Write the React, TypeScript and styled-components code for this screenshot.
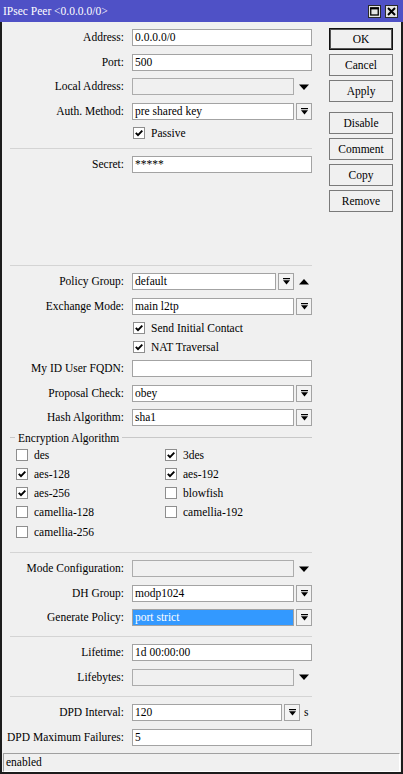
import React from 'react';
import styled, { createGlobalStyle, css } from 'styled-components';

/* ------------------------------- Global ------------------------------- */
const GlobalStyle = createGlobalStyle`
  html, body {
    margin: 0;
    padding: 0;
    background: #f0f0f0;
  }
  #root {
    width: 403px;
    height: 774px;
  }
  * {
    box-sizing: border-box;
  }
`;

const FONT = `'Liberation Serif', 'DejaVu Serif', serif`;

/* ------------------------------- Window ------------------------------- */
const Window = styled.div`
  width: 403px;
  height: 774px;
  display: flex;
  flex-direction: column;
  background: #f0f0f0;
  font-family: ${FONT};
  font-size: 11.5px;
  color: #000;
`;

const TitleBar = styled.div`
  height: 22px;
  flex: none;
  display: flex;
  align-items: center;
  justify-content: space-between;
  padding: 0 5px 0 3px;
  background: #4f51c6;
  color: #fff;
  font-size: 11.5px;
`;

const TitleButtons = styled.div`
  display: flex;
  gap: 4px;
`;

const TitleButton = styled.div`
  width: 13px;
  height: 13px;
  display: flex;
  align-items: center;
  justify-content: center;
  background: #e4e4e4;
  border: 1px solid #2a2a2a;
`;

const Frame = styled.div`
  flex: 1;
  display: flex;
  flex-direction: column;
  border-left: 2px solid #1c1c1c;
  border-right: 2px solid #1c1c1c;
  border-bottom: 2px solid #1c1c1c;
`;

const Body = styled.div`
  flex: 1;
  display: flex;
  padding-top: 7px;
`;

/* -------------------------------- Form -------------------------------- */
const Form = styled.div`
  width: 310px;
  display: flex;
  flex-direction: column;
`;

const Row = styled.div`
  display: grid;
  grid-template-columns: 122px 180px;
  column-gap: 8px;
  height: 17px;
  margin-bottom: 7.5px;
`;

const Label = styled.div`
  text-align: right;
  line-height: 17px;
  white-space: nowrap;
`;

const Field = styled.div`
  display: flex;
  align-items: stretch;
  gap: 2px;
`;

const TextBox = styled.div<{ $disabled?: boolean; $selected?: boolean }>`
  flex: 1;
  min-width: 0;
  height: 17px;
  line-height: 15px;
  padding-left: 2px;
  border: 1px solid #a3a3a3;
  background: #fff;
  white-space: nowrap;
  overflow: hidden;
  ${(p) =>
    p.$disabled &&
    css`
      background: #f0f0f0;
      border-color: #acacac;
    `}
  ${(p) =>
    p.$selected &&
    css`
      background: #3399ff;
      color: #fff;
    `}
`;

const DropButton = styled.div`
  width: 16px;
  flex: none;
  display: flex;
  align-items: center;
  justify-content: center;
  border: 1px solid #a3a3a3;
  background: #f3f3f3;
`;

const BareArrow = styled.div`
  width: 16px;
  flex: none;
  display: flex;
  align-items: center;
  justify-content: center;
`;

const Suffix = styled.div`
  width: 10px;
  flex: none;
  line-height: 17px;
  padding-left: 2px;
`;

const CheckRow = styled.div<{ $indent?: number }>`
  display: flex;
  align-items: center;
  gap: 6px;
  height: 12px;
  margin-bottom: 7px;
  padding-left: ${(p) => p.$indent ?? 131}px;
  white-space: nowrap;
`;

const Box = styled.div`
  width: 12px;
  height: 12px;
  flex: none;
  display: flex;
  align-items: center;
  justify-content: center;
  border: 1px solid #8e8e8e;
  background: #fff;
`;

const Separator = styled.div<{ $above?: number }>`
  height: 1px;
  margin: ${(p) => p.$above ?? 2}px 0 7px 8px;
  background: #d4d4d4;
`;

const Spacer = styled.div<{ $h: number }>`
  height: ${(p) => p.$h}px;
  flex: none;
`;

const GroupHeader = styled.div`
  display: flex;
  align-items: center;
  height: 10px;
  margin: -1px 0 6px 8px;
  white-space: nowrap;
`;

const GroupLine = styled.div<{ $w?: number }>`
  height: 1px;
  background: #c8c8c8;
  ${(p) => (p.$w ? `width: ${p.$w}px;` : 'flex: 1;')}
`;

const GroupTitle = styled.span`
  padding: 0 3px;
`;

const CheckGrid = styled.div`
  display: grid;
  grid-template-columns: 149px 149px;
  grid-auto-rows: 12px;
  row-gap: 7.25px;
  padding-left: 14px;

  ${CheckRow} {
    margin-bottom: 0;
    padding-left: 0;
  }
`;

/* ------------------------------- Buttons ------------------------------ */
const ButtonColumn = styled.div`
  width: 64px;
  margin: -1px 0 0 17px;
  display: flex;
  flex-direction: column;
  gap: 4px;
`;

const Button = styled.div<{ $default?: boolean }>`
  height: 22px;
  display: flex;
  align-items: center;
  justify-content: center;
  background: #f0f0f0;
  border: 1px solid #7a7a7a;
  ${(p) =>
    p.$default &&
    css`
      border-color: #111;
      box-shadow: inset 0 0 0 1px #555;
    `}
`;

const StatusBar = styled.div`
  height: 19px;
  margin: 0 1px;
  padding-left: 2px;
  line-height: 17px;
  border: 1px solid;
  border-color: #a0a0a0 #fff #fff #a0a0a0;
`;

/* -------------------------------- Icons ------------------------------- */
const DropIcon = () => (
  <svg width="7" height="7" viewBox="0 0 7 7">
    <rect x="0" y="0" width="7" height="1.2" fill="#000" />
    <polygon points="0,2.2 7,2.2 3.5,6.5" fill="#000" />
  </svg>
);

const Triangle = ({ up }: { up?: boolean }) => (
  <svg width="10" height="6" viewBox="0 0 10 6">
    <polygon points={up ? '0,5.5 10,5.5 5,0' : '0,0.5 10,0.5 5,6'} fill="#000" />
  </svg>
);

const Tick = () => (
  <svg width="10" height="10" viewBox="0 0 10 10">
    <path d="M1.8 4.8 L4 7.2 L8.3 2.6" fill="none" stroke="#000" strokeWidth="1.9" />
  </svg>
);

/* ------------------------------- Pieces ------------------------------- */
type FieldProps = {
  label: string;
  value?: string;
  disabled?: boolean;
  selected?: boolean;
  drop?: boolean;
  arrow?: 'up' | 'down';
  suffix?: string;
};

const FormRow = ({ label, value, disabled, selected, drop, arrow, suffix }: FieldProps) => (
  <Row>
    <Label>{label}:</Label>
    <Field>
      <TextBox $disabled={disabled} $selected={selected}>
        {value}
      </TextBox>
      {drop && (
        <DropButton>
          <DropIcon />
        </DropButton>
      )}
      {arrow && (
        <BareArrow>
          <Triangle up={arrow === 'up'} />
        </BareArrow>
      )}
      {suffix && <Suffix>{suffix}</Suffix>}
    </Field>
  </Row>
);

const Check = ({ label, checked, indent }: { label: string; checked?: boolean; indent?: number }) => (
  <CheckRow $indent={indent}>
    <Box>{checked && <Tick />}</Box>
    <span>{label}</span>
  </CheckRow>
);

const ciphers: [string, boolean][] = [
  ['des', false],
  ['3des', true],
  ['aes-128', true],
  ['aes-192', true],
  ['aes-256', true],
  ['blowfish', false],
  ['camellia-128', false],
  ['camellia-192', false],
  ['camellia-256', false],
];

const App = () => {
  return (
    <>
      <GlobalStyle />
      <Window>
        <TitleBar>
          <span>IPsec Peer &lt;0.0.0.0/0&gt;</span>
          <TitleButtons>
            <TitleButton>
              <svg width="9" height="9" viewBox="0 0 9 9">
                <rect x="0.75" y="1" width="7.5" height="7" fill="none" stroke="#000" strokeWidth="1.3" />
                <rect x="0" y="0.4" width="9" height="2" fill="#000" />
              </svg>
            </TitleButton>
            <TitleButton>
              <svg width="9" height="9" viewBox="0 0 9 9">
                <path d="M1 1 L8 8 M8 1 L1 8" stroke="#000" strokeWidth="2" />
              </svg>
            </TitleButton>
          </TitleButtons>
        </TitleBar>

        <Frame>
          <Body>
            <Form>
              <FormRow label="Address" value="0.0.0.0/0" />
              <FormRow label="Port" value="500" />
              <FormRow label="Local Address" disabled arrow="down" />
              <FormRow label="Auth. Method" value="pre shared key" drop />
              <Check label="Passive" checked />

              <Separator />
              <FormRow label="Secret" value="*****" />
              <Spacer $h={82.5} />

              <Separator />
              <FormRow label="Policy Group" value="default" drop arrow="up" />
              <FormRow label="Exchange Mode" value="main l2tp" drop />
              <Check label="Send Initial Contact" checked />
              <Check label="NAT Traversal" checked />
              <FormRow label="My ID User FQDN" />
              <FormRow label="Proposal Check" value="obey" drop />
              <FormRow label="Hash Algorithm" value="sha1" drop />

              <GroupHeader>
                <GroupLine $w={5} />
                <GroupTitle>Encryption Algorithm</GroupTitle>
                <GroupLine />
              </GroupHeader>
              <CheckGrid>
                {ciphers.map(([name, on]) => (
                  <Check key={name} label={name} checked={on} />
                ))}
              </CheckGrid>

              <Separator $above={14.5} />
              <FormRow label="Mode Configuration" disabled arrow="down" />
              <FormRow label="DH Group" value="modp1024" drop />
              <FormRow label="Generate Policy" value="port strict" selected drop />

              <Separator $above={2.5} />
              <FormRow label="Lifetime" value="1d 00:00:00" />
              <FormRow label="Lifebytes" disabled arrow="down" />

              <Separator $above={3} />
              <FormRow label="DPD Interval" value="120" drop suffix="s" />
              <FormRow label="DPD Maximum Failures" value="5" />
            </Form>

            <ButtonColumn>
              <Button $default>OK</Button>
              <Button>Cancel</Button>
              <Button>Apply</Button>
              <Spacer $h={2} />
              <Button>Disable</Button>
              <Button>Comment</Button>
              <Button>Copy</Button>
              <Button>Remove</Button>
            </ButtonColumn>
          </Body>
          <StatusBar>enabled</StatusBar>
        </Frame>
      </Window>
    </>
  );
};

export default App;
